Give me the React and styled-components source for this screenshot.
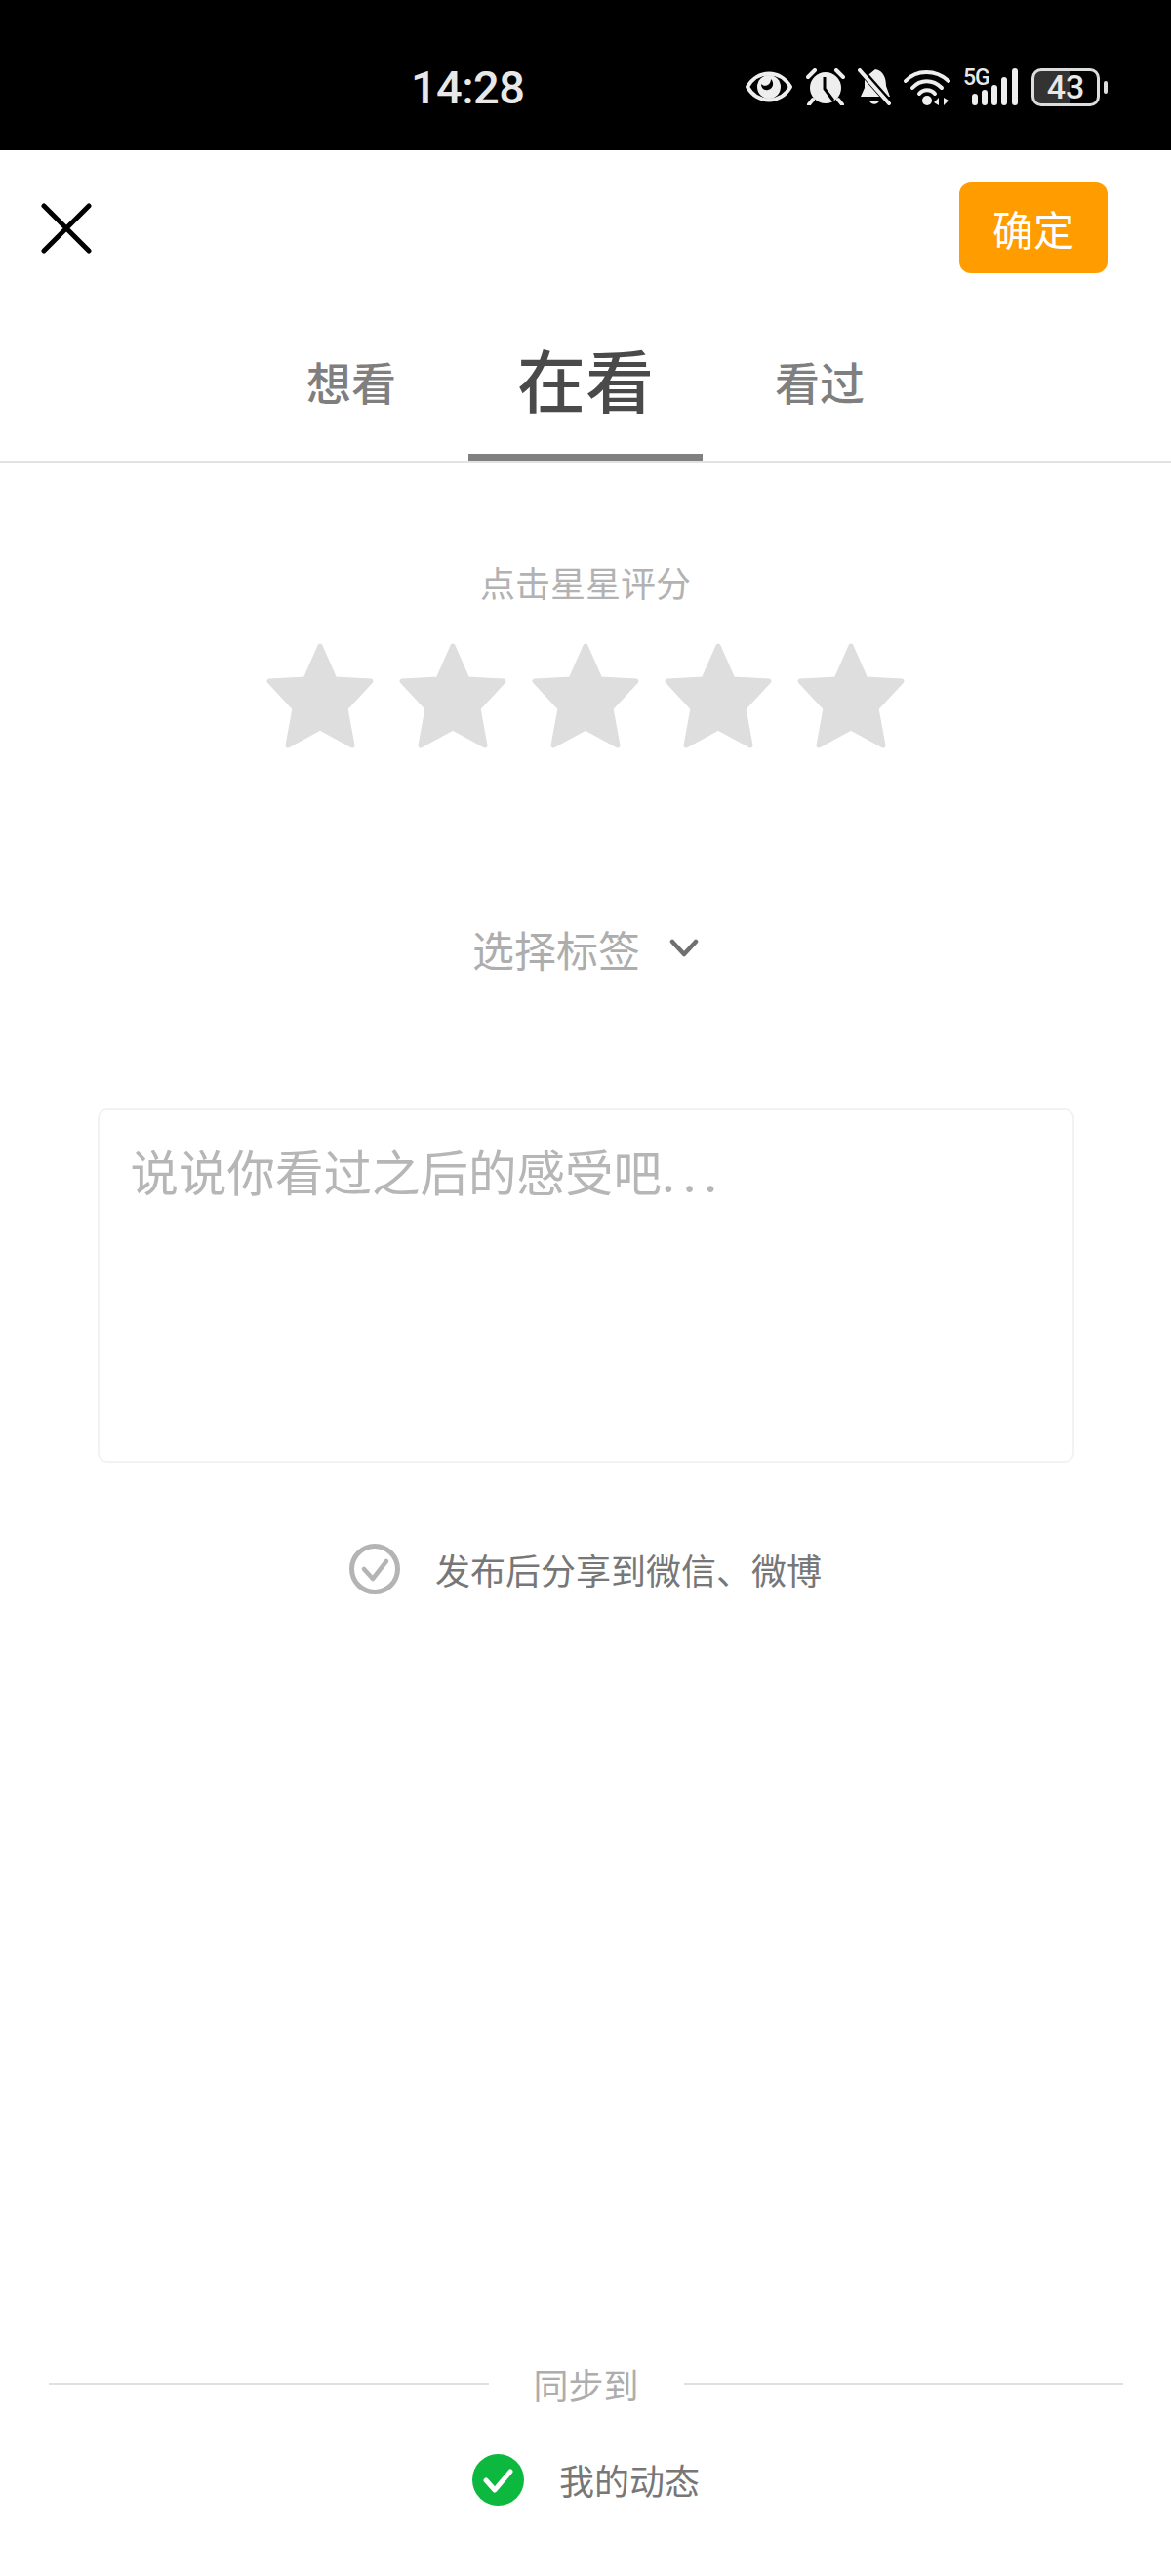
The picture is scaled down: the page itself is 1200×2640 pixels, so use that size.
import React from "react"
import styled, { createGlobalStyle } from "styled-components"

const Global = createGlobalStyle`
  html, body {
    margin: 0;
    padding: 0;
    background: #fff;
  }
  body {
    font-family: "Noto Sans CJK SC", "Noto Sans", sans-serif;
  }
`

const Page = styled.div`
  width: 1200px;
  height: 2640px;
  display: flex;
  flex-direction: column;
  background: #fff;
  overflow: hidden;
`

const StatusBar = styled.div`
  height: 154px;
  flex-shrink: 0;
  background: #000;
  color: #e8e8e8;
  display: flex;
  align-items: center;
  padding: 24px 65px 0 421px;
  box-sizing: border-box;
`

const Clock = styled.span`
  font-family: "Roboto", sans-serif;
  font-size: 47px;
  font-weight: 500;
  letter-spacing: -0.6px;
  line-height: 1;
`

const StatusIcons = styled.div`
  margin-left: auto;
  display: flex;
  align-items: center;
  gap: 13px;
`

const Network = styled.div`
  display: flex;
  align-items: flex-end;
  height: 38px;
  position: relative;
  width: 56px;
`

const NetworkLabel = styled.span`
  position: absolute;
  left: 0;
  top: -2px;
  font-family: "Roboto", sans-serif;
  font-size: 23px;
  font-weight: 500;
  line-height: 1;
  letter-spacing: -1px;
`

const Battery = styled.div`
  display: flex;
  align-items: center;
  gap: 4px;
  margin-left: 1px;
`

const BatteryBody = styled.div`
  width: 70px;
  height: 39px;
  box-sizing: border-box;
  border: 3px solid #ddd;
  border-radius: 10px;
  display: flex;
  align-items: center;
  justify-content: center;
  font-family: "Roboto", sans-serif;
  font-size: 34px;
  font-weight: 500;
  line-height: 1;
  background: linear-gradient(to right, #333 0 56%, #000 56%);
`

const BatteryNub = styled.div`
  width: 4px;
  height: 13px;
  border-radius: 2px;
  background: #ddd;
`

const Header = styled.div`
  display: flex;
  align-items: center;
  justify-content: space-between;
  padding: 33px 65px 0 42px;
`

const CloseButton = styled.button`
  width: 52px;
  height: 52px;
  padding: 0;
  border: 0;
  background: none;
  display: flex;
`

const ConfirmButton = styled.button`
  width: 152px;
  height: 93px;
  border: 0;
  border-radius: 12px;
  background: #ff9c00;
  color: #fff;
  font-family: inherit;
  font-size: 42px;
  font-weight: 400;
  padding: 0;
`

const TabBar = styled.div`
  height: 194px;
  box-sizing: border-box;
  display: flex;
  justify-content: center;
  border-bottom: 2px solid #e2e2e2;
`

const Tab = styled.div`
  width: 240px;
  display: flex;
  align-items: center;
  justify-content: center;
  box-sizing: border-box;
  padding-top: ${(p) => (p.$active ? "30px" : "35px")};
  color: ${(p) => (p.$active ? "#4a4a4a" : "#7f7f7f")};
  font-size: ${(p) => (p.$active ? "70px" : "46px")};
  font-weight: 500;
  line-height: 1;
  border-bottom: 7px solid ${(p) => (p.$active ? "#808080" : "transparent")};
`

const Rating = styled.div`
  display: flex;
  flex-direction: column;
  align-items: center;
  padding-top: 100px;
`

const Hint = styled.div`
  font-size: 36px;
  line-height: 44px;
  color: #b2b2b2;
`

const Stars = styled.div`
  display: flex;
  gap: 26px;
  margin-top: 41px;
`

const TagPicker = styled.div`
  display: flex;
  align-items: center;
  justify-content: center;
  gap: 30px;
  margin-top: 177px;
  font-size: 43px;
  line-height: 56px;
  color: #adadad;
`

const Comment = styled.div`
  width: 1001px;
  height: 363px;
  margin: 136px auto 0;
  box-sizing: border-box;
  padding: 32px 32px;
  border: 2px solid #f2f2f2;
  border-radius: 10px;
  font-size: 49.5px;
  line-height: 60px;
  color: #b6b6b6;
`

const Ellipsis = styled.span`
  letter-spacing: 0.16em;
`

const ShareRow = styled.div`
  display: flex;
  align-items: center;
  justify-content: center;
  gap: 36px;
  margin-top: 83px;
  font-size: 36px;
  line-height: 52px;
  color: #777;
`

const Sync = styled.div`
  margin-top: auto;
  padding: 0 49px 72px 50px;
  display: flex;
  flex-direction: column;
  align-items: center;
`

const SyncTitle = styled.div`
  width: 100%;
  display: flex;
  align-items: center;
  gap: 46px;
  font-size: 36px;
  line-height: 44px;
  color: #adadad;
`

const SyncLine = styled.div`
  flex: 1;
  height: 2px;
  background: #e0e0e0;
`

const SyncTarget = styled.div`
  display: flex;
  align-items: center;
  gap: 36px;
  margin-top: 50px;
  font-size: 36px;
  line-height: 53px;
  color: #777;
`

const Star = () => (
  <svg width="110" height="108" viewBox="0 0 110 108">
    <path
      d="M55 3 L70 37 L107 39 L81 67 L88 105 L55 87 L22 105 L29 67 L3 39 L40 37 Z"
      fill="#dedede"
      stroke="#dedede"
      strokeWidth="5"
      strokeLinejoin="round"
    />
  </svg>
)

const CheckedBadge = () => (
  <svg width="53" height="53" viewBox="0 0 53 53">
    <circle cx="26.5" cy="26.5" r="26.5" fill="#0db83e" />
    <path d="M14 27 L23 37 L39 18" fill="none" stroke="#fff" strokeWidth="5" strokeLinecap="round" strokeLinejoin="round" />
  </svg>
)

const OutlineCheck = () => (
  <svg width="52" height="52" viewBox="0 0 52 52">
    <circle cx="26" cy="26" r="23.5" fill="none" stroke="#b4b4b4" strokeWidth="5" />
    <path d="M15 26 L24 36 L38 18" fill="none" stroke="#b4b4b4" strokeWidth="4.5" strokeLinecap="round" strokeLinejoin="round" />
  </svg>
)

const EyeIcon = () => (
  <svg width="50" height="34" viewBox="0 0 50 34">
    <path d="M3 17 C 13 -1, 37 -1, 47 17 C 37 35, 13 35, 3 17 Z" fill="none" stroke="#eee" strokeWidth="4" strokeLinejoin="round" />
    <circle cx="25" cy="17" r="12" fill="#eee" />
    <path d="M17 14 C 21 18, 27 15, 27 9 C 31 13, 29 19, 24 20 C 20 21, 17 18, 17 14 Z" fill="#000" />
  </svg>
)

const AlarmIcon = () => (
  <svg width="40" height="38" viewBox="0 0 40 38">
    <circle cx="20" cy="20" r="16" fill="#eee" />
    <path d="M19 9 V21 L28 33" fill="none" stroke="#000" strokeWidth="3" />
    <path d="M2 9 L9 2 M38 9 L31 2 M7 32 L3 37 M33 32 L37 37" stroke="#eee" strokeWidth="4" strokeLinecap="round" />
  </svg>
)

const BellOffIcon = () => (
  <svg width="34" height="38" viewBox="0 0 34 38">
    <path d="M18 1 C 26 2, 29 10, 29 18 L33 29 H3 L7 20 V10 Z" fill="#eee" />
    <path d="M12 33 H22 C 21 38, 13 38, 12 33 Z" fill="#eee" />
    <path d="M3 2 L33 36" stroke="#000" strokeWidth="7" />
    <path d="M2 2 L32 36" stroke="#eee" strokeWidth="4" strokeLinecap="round" />
  </svg>
)

const WifiIcon = () => (
  <svg width="48" height="38" viewBox="0 0 48 38">
    <g fill="none" stroke="#eee" strokeWidth="4" strokeLinecap="round">
      <path d="M2 13 C 13 1, 33 1, 46 13" />
      <path d="M9 20 C 17 11, 30 11, 39 20" />
      <path d="M16 26 C 20 21, 28 21, 32 26" />
    </g>
    <circle cx="24" cy="33" r="5" fill="#eee" />
    <path d="M36 30 V38 L31 35 Z M41 30 L46 33 L41 38 Z" fill="#eee" />
  </svg>
)

const SignalBars = () => (
  <svg width="47" height="38" viewBox="0 0 47 38" style={{ marginLeft: "auto" }}>
    <g fill="#eee">
      <rect x="0" y="26" width="6" height="12" rx="3" />
      <rect x="10" y="22" width="6" height="16" rx="3" />
      <rect x="20" y="17" width="6" height="21" rx="3" />
      <rect x="30" y="9" width="6" height="29" rx="3" />
      <rect x="41" y="0" width="6" height="38" rx="3" />
    </g>
  </svg>
)

const CloseIcon = () => (
  <svg width="52" height="52" viewBox="0 0 52 52">
    <path d="M3 3 L49 49 M49 3 L3 49" stroke="#000" strokeWidth="5" strokeLinecap="round" />
  </svg>
)

const ChevronDown = () => (
  <svg width="30" height="20" viewBox="0 0 30 20">
    <path d="M3 3 L15 16 L27 3" fill="none" stroke="#707070" strokeWidth="4.5" strokeLinecap="round" strokeLinejoin="round" />
  </svg>
)

export default function App() {
  return (
    <Page>
      <Global />
      <StatusBar>
        <Clock>14:28</Clock>
        <StatusIcons>
          <EyeIcon />
          <AlarmIcon />
          <BellOffIcon />
          <WifiIcon />
          <Network>
            <NetworkLabel>5G</NetworkLabel>
            <SignalBars />
          </Network>
          <Battery>
            <BatteryBody>43</BatteryBody>
            <BatteryNub />
          </Battery>
        </StatusIcons>
      </StatusBar>
      <Header>
        <CloseButton>
          <CloseIcon />
        </CloseButton>
        <ConfirmButton>确定</ConfirmButton>
      </Header>
      <TabBar>
        <Tab>想看</Tab>
        <Tab $active>在看</Tab>
        <Tab>看过</Tab>
      </TabBar>
      <Rating>
        <Hint>点击星星评分</Hint>
        <Stars>
          {[1, 2, 3, 4, 5].map((n) => (
            <Star key={n} />
          ))}
        </Stars>
      </Rating>
      <TagPicker>
        选择标签
        <ChevronDown />
      </TagPicker>
      <Comment>
        说说你看过之后的感受吧<Ellipsis>...</Ellipsis>
      </Comment>
      <ShareRow>
        <OutlineCheck />
        发布后分享到微信、微博
      </ShareRow>
      <Sync>
        <SyncTitle>
          <SyncLine />
          同步到
          <SyncLine />
        </SyncTitle>
        <SyncTarget>
          <CheckedBadge />
          我的动态
        </SyncTarget>
      </Sync>
    </Page>
  )
}
